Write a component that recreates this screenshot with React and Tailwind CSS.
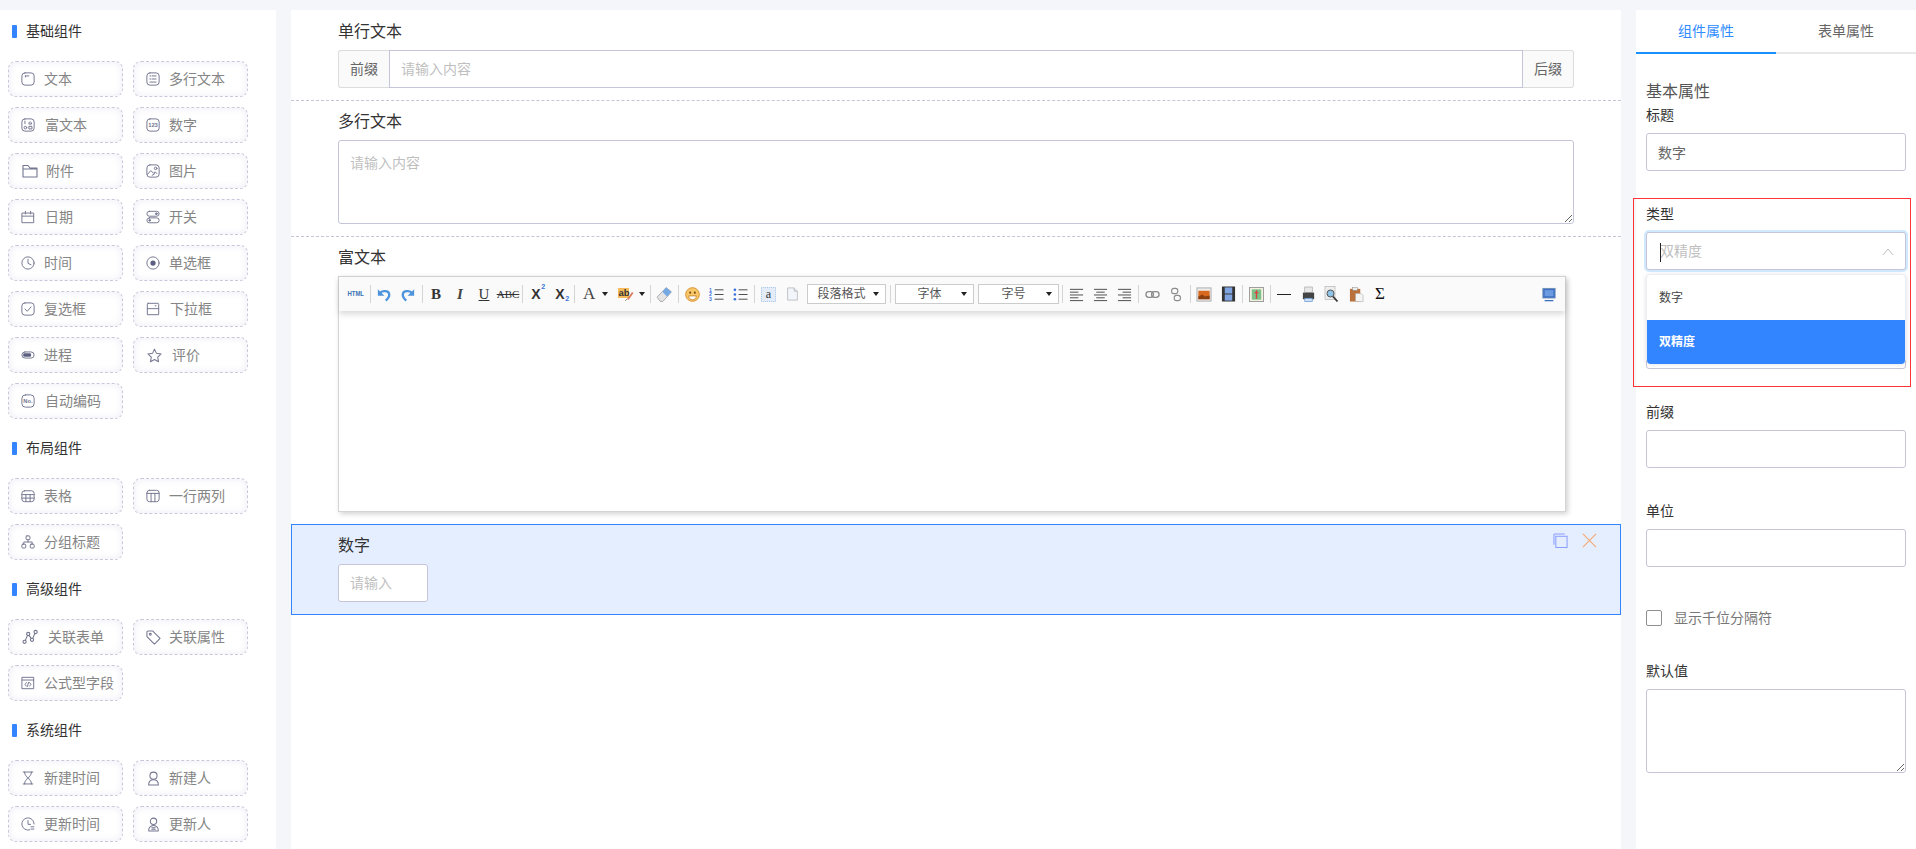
import React from 'react';

const Ico = ({ children, className = 'w-[14px] h-[14px]' }) => (
  <svg viewBox="0 0 16 16" fill="none" stroke="#73768f" strokeWidth="1.1" strokeLinecap="round" strokeLinejoin="round" className={`shrink-0 ${className}`}>
    {children}
  </svg>
);

const Box = () => <rect x="1" y="1" width="14" height="14" rx="3.5" />;

const icons = {
  text: <Ico><Box /><path d="M5 4.5h4M5 4.5v1.2" /></Ico>,
  multi: <Ico><Box /><path d="M4.5 4.5h1M7 4.5h4.5M4.5 8h1M7 8h4.5M4.5 11.5h7" /></Ico>,
  rich: <Ico><Box /><path d="M4.5 3.5v3M9 6.5c0-3 3-3 3 0zM9.5 9.5h3v3h-3z" /><circle cx="5" cy="11" r="1.5" /></Ico>,
  num: <Ico><Box /><text x="8" y="10.6" fontSize="6.6" fontWeight="700" textAnchor="middle" fill="#73768f" stroke="none" fontFamily="Liberation Sans">123</text></Ico>,
  folder: <Ico className="w-[16px] h-[16px] ml-[1px]"><path d="M1 14V2.5h5l2 2.5h7v9zM1 6h14" /></Ico>,
  image: <Ico><Box /><circle cx="11" cy="5" r="1.5" /><path d="M1.5 12l4-4.5 3 3 2-1.5 2 2M7 13l3-2" /></Ico>,
  date: <Ico><path d="M1.5 3.5h13v11h-13zM1.5 7h13M5 1.5v3M11 1.5v3" /></Ico>,
  toggle: <Ico><rect x="1" y="1.5" width="14" height="5.6" rx="2.8" /><rect x="1" y="9" width="14" height="5.6" rx="2.8" /><circle cx="11.8" cy="4.3" r="1" fill="#73768f" /><circle cx="4.2" cy="11.8" r="1" fill="#73768f" /></Ico>,
  clock: <Ico><circle cx="8" cy="8" r="7" /><path d="M8 3.8V8.4l3.4 1.6" /></Ico>,
  radio: <Ico><circle cx="8" cy="8" r="7" /><circle cx="8" cy="8" r="3" fill="#5b5f80" stroke="none" /></Ico>,
  check: <Ico><Box /><path d="M4.5 8l2.6 2.6 4.4-5" /></Ico>,
  select: <Ico><path d="M2.5 1.5h11a1 1 0 0 1 1 1v12h-13v-12a1 1 0 0 1 1-1zM1.5 7.6h13" /><path d="M10.5 4.3h1" /></Ico>,
  progress: <Ico><rect x="1" y="4.5" width="14" height="7" rx="3.5" /><rect x="2.5" y="6" width="9" height="4" rx="1.5" fill="#5b5f80" stroke="none" /></Ico>,
  star: <Ico className="w-[15px] h-[15px] ml-[1px]"><path d="M8 1.2l2.1 4.5 4.9.6-3.6 3.4.9 4.9L8 12.2l-4.3 2.4.9-4.9L1 6.3l4.9-.6z" /></Ico>,
  no: <Ico><rect x="1" y="1" width="14" height="14" rx="4" /><text x="8" y="10.6" fontSize="6.6" fontWeight="700" textAnchor="middle" fill="#73768f" stroke="none" fontFamily="Liberation Sans">No.</text></Ico>,
  table: <Ico><rect x="1" y="2" width="14" height="12.5" rx="3" /><path d="M1 6.4h14M1 10.4h14M5.6 6.4v8M10.4 6.4v8" /></Ico>,
  cols: <Ico><rect x="1" y="1.5" width="14" height="13" rx="3" /><path d="M1 5h14M5.8 5v9.5M10.2 5v9.5" /></Ico>,
  tree: <Ico><rect x="5.8" y="1" width="4.4" height="4.4" rx="1" /><rect x="1" y="10.5" width="4.4" height="4.4" rx="1" /><rect x="10.6" y="10.5" width="4.4" height="4.4" rx="1" /><path d="M8 5.4V8M3.2 10.5V8h9.6v2.5" /></Ico>,
  graph: <Ico className="w-[16px] h-[16px] ml-[1px]"><circle cx="2.6" cy="12.8" r="1.6" /><circle cx="6.2" cy="5" r="1.6" /><circle cx="10" cy="10.8" r="1.6" /><circle cx="13.6" cy="3" r="1.6" /><path d="M3.3 11.4l2.2-5M7 6.4l2.2 3M10.7 9.4l2.2-5" /></Ico>,
  tag: <Ico className="w-[15px] h-[15px]"><path d="M1 2.2a1.2 1.2 0 0 1 1.2-1.2H7l8 8-6 6-8-8z" /><circle cx="4.6" cy="4.6" r="1" /></Ico>,
  code: <Ico><path d="M1.5 1.5h13v13h-13zM1.5 4.6h13" /><path d="M6.2 7.5L4.6 9.6l1.6 2M9.8 7.5l1.6 2.1-1.6 2M8.6 7.4l-1.2 4.4" /></Ico>,
  hour: <Ico><path d="M2.5 1.2h11M2.5 14.8h11M4 1.2c0 4 3 5 3.6 6.8C7 9.8 4 10.8 4 14.8M12 1.2c0 4-3 5-3.6 6.8.6 1.8 3.6 2.8 3.6 6.8" /></Ico>,
  user: <Ico className="w-[15px] h-[15px]"><circle cx="8" cy="5" r="3.8" /><path d="M2.8 15c0-3.6 2-5.6 5.2-5.6s5.2 2 5.2 5.6z" /></Ico>,
  clock2: <Ico><path d="M15 8a7 7 0 1 0-5 6.7" /><path d="M8 4v4.4h3M11.4 11.2h3.4M11.4 13.8h3.4" /></Ico>,
  user2: <Ico className="w-[15px] h-[15px]"><circle cx="8" cy="4.6" r="3.4" /><path d="M3 15c-.6-3 1.4-6 5-6s5.600 3 5 6z" /><path d="M6.200 11.400h3.600M6.200 13h3.600" /></Ico>,
};

const groups = [
  {
    title: '基础组件',
    items: [
      ['文本', 'text', 'ml-[9px]'], ['多行文本', 'multi', 'ml-[9px]'],
      ['富文本', 'rich', 'ml-[10px]'], ['数字', 'num', 'ml-[9px]'],
      ['附件', 'folder', 'ml-[8px]'], ['图片', 'image', 'ml-[9px]'],
      ['日期', 'date', 'ml-[10px]'], ['开关', 'toggle', 'ml-[9px]'],
      ['时间', 'clock', 'ml-[9px]'], ['单选框', 'radio', 'ml-[9px]'],
      ['复选框', 'check', 'ml-[9px]'], ['下拉框', 'select', 'ml-[10px]'],
      ['进程', 'progress', 'ml-[9px]'], ['评价', 'star', 'ml-[10px]'],
      ['自动编码', 'no', 'ml-[10px]'],
    ],
  },
  {
    title: '布局组件',
    items: [['表格', 'table', 'ml-[9px]'], ['一行两列', 'cols', 'ml-[9px]'], ['分组标题', 'tree', 'ml-[9px]']],
  },
  {
    title: '高级组件',
    items: [['关联表单', 'graph', 'ml-[10px]'], ['关联属性', 'tag', 'ml-[8px]'], ['公式型字段', 'code', 'ml-[9px]']],
  },
  {
    title: '系统组件',
    items: [['新建时间', 'hour', 'ml-[9px]'], ['新建人', 'user', 'ml-[8px]'], ['更新时间', 'clock2', 'ml-[9px]'], ['更新人', 'user2', 'ml-[8px]']],
  },
];

function Palette() {
  return (
    <aside className="w-[276px] h-full shrink-0 bg-white">
      {groups.map((g) => (
        <section key={g.title} className="pb-[8px]">
          <div className="h-[42px] mb-[9px] flex items-center pl-[12px] text-[14px] text-[#333]">
            <span className="w-[5px] h-[13px] mr-[9px] rounded-[1px] bg-[#3385ff]" />
            {g.title}
          </div>
          <div className="grid grid-cols-[115px_115px] gap-x-[10px] gap-y-[10px] pl-[8px]">
            {g.items.map(([label, icon, gap]) => (
              <div key={label} className="h-[36px] flex items-center pl-[12px] rounded-[8px] border border-dashed border-[#c8c8da] shadow-[inset_0_0_7px_rgba(120,120,190,0.14)] text-[14px] text-[#858585]">
                {icons[icon]}
                <span className={gap}>{label}</span>
              </div>
            ))}
          </div>
        </section>
      ))}
    </aside>
  );
}

const Sep = ({ className = 'w-[4px]' }) => (
  <span className={`h-[18px] flex justify-center shrink-0 ${className}`}>
    <span className="w-[1px] h-full bg-[#d5d5d5]" />
  </span>
);

const Btn = ({ children, className = 'w-[24px]' }) => (
  <span className={`h-[24px] shrink-0 flex items-center justify-center ${className}`}>{children}</span>
);

const Caret = ({ className = '' }) => (
  <span className={`w-0 h-0 border-x-[3px] border-x-transparent border-t-[4px] border-t-[#222] ${className}`} />
);

const Tsvg = ({ children, w = 16, h = 16 }) => (
  <svg viewBox="0 0 16 16" fill="none" style={{ width: w, height: h }}>{children}</svg>
);

const Lines = ({ a }) => (
  <Tsvg w={15} h={15}>
    <path d={a} stroke="#444" strokeWidth="1" />
  </Tsvg>
);

const ToolSelect = ({ label, className }) => (
  <span className={`h-[20px] shrink-0 relative flex items-center justify-center border border-[#cccccc] bg-white text-[12px] text-[#555] ${className}`}>
    <span className="pr-[10px]">{label}</span>
    <Caret className="absolute right-[6px] top-[7px] border-x-[2.5px] border-t-[3px]" />
  </span>
);

function Toolbar() {
  const serif = "font-['Liberation_Serif',serif]";
  return (
    <div className="h-[34px] flex items-center pl-[5px] pr-[4px] bg-[#fafafa] shadow-[0_3px_6px_rgba(120,120,120,0.28)] relative">
      <Btn><span className="text-[7px] font-bold scale-x-[0.85] text-[#3a72b5] font-['Liberation_Sans',sans-serif]">HTML</span></Btn>
      <Sep />
      <Btn>
        <Tsvg w={14} h={15}>
          <path d="M3.500 6C7 3 14 3.500 14 8.500 14 11 12 13 10 15" stroke="#4e94dc" strokeWidth="2.600" />
          <path d="M1 2v7.500h7.500z" fill="#4e94dc" />
        </Tsvg>
      </Btn>
      <Btn>
        <Tsvg w={14} h={15}>
          <path d="M12.500 6C9 3 2 3.500 2 8.500 2 11 4 13 6 15" stroke="#4e94dc" strokeWidth="2.600" />
          <path d="M15 2v7.500H7.500z" fill="#4e94dc" />
        </Tsvg>
      </Btn>
      <Sep />
      <Btn><span className={`${serif} text-[15px] font-bold text-[#333]`}>B</span></Btn>
      <Btn><span className={`${serif} text-[15px] italic font-bold text-[#444]`}>I</span></Btn>
      <Btn><span className={`${serif} text-[15px] text-[#333] underline`}>U</span></Btn>
      <Btn><span className={`${serif} text-[11px] text-[#333] line-through`}>ABC</span></Btn>
      <Sep />
      <Btn>
        <span className="relative text-[14px] font-bold text-[#333] font-['Liberation_Sans',sans-serif]">X<span className="absolute left-[10px] -top-[1px] text-[7px] leading-[8px] text-[#3a72dc]">2</span></span>
      </Btn>
      <Btn>
        <span className="relative text-[14px] font-bold text-[#333] font-['Liberation_Sans',sans-serif]">X<span className="absolute left-[10px] bottom-[2px] text-[7px] leading-[8px] text-[#3a72dc]">2</span></span>
      </Btn>
      <Sep />
      <span className="w-[36px] h-[24px] shrink-0 flex items-center pl-[7px]">
        <span className={`${serif} w-[13px] text-[17px] text-[#444]`}>A</span>
        <Caret className="ml-[6px]" />
      </span>
      <span className="w-[36px] h-[24px] shrink-0 flex items-center pl-[6px]">
        <Tsvg w={16} h={16}>
          <rect x="0" y="2" width="11" height="10" fill="#f5bb5a" />
          <path d="M9 13l5-7 1.500 1-5 7z" fill="#d9795e" />
          <path d="M7 15l2-2" stroke="#999" />
          <text x="0.500" y="9.500" fontSize="9.500" fontWeight="700" fill="#333" stroke="none" fontFamily="Liberation Sans">ab</text>
        </Tsvg>
        <Caret className="ml-[5px]" />
      </span>
      <Sep />
      <Btn>
        <Tsvg w={17} h={17}><path d="M1 10.500L9.500 1.500l5 4L6.500 14.500H4z" fill="#e4e4e4" stroke="#999" strokeWidth=".7" /><path d="M6 5.500L9.500 1.500l5 4L10.500 10z" fill="#75a9e3" /></Tsvg>
      </Btn>
      <Sep />
      <Btn>
        <Tsvg w={15} h={15}>
          <circle cx="8" cy="8" r="7.300" fill="#f8c868" stroke="#d98e2b" />
          <circle cx="5.500" cy="6" r="1.100" fill="#7a4a10" />
          <circle cx="10.500" cy="6" r="1.100" fill="#7a4a10" />
          <path d="M4 9.500h8c0 3-2 4-4 4s-4-1-4-4z" fill="#fff" stroke="#b96d1a" strokeWidth=".7" />
        </Tsvg>
      </Btn>
      <Btn>
        <Tsvg w={15} h={15}>
          <path d="M6 3h9.500M6 8h9.500M6 13h9.500" stroke="#444" />
          <text x="0" y="5" fontSize="5.500" fontWeight="700" fill="#3a72dc" fontFamily="Liberation Sans">1</text>
          <text x="0" y="10" fontSize="5.500" fontWeight="700" fill="#3a72dc" fontFamily="Liberation Sans">2</text>
          <text x="0" y="15" fontSize="5.500" fontWeight="700" fill="#3a72dc" fontFamily="Liberation Sans">3</text>
        </Tsvg>
      </Btn>
      <Btn>
        <Tsvg w={15} h={15}>
          <path d="M6 3h9.500M6 8h9.500M6 13h9.500" stroke="#444" />
          <circle cx="2" cy="3" r="1.400" fill="#3a72dc" />
          <circle cx="2" cy="8" r="1.400" fill="#3a72dc" />
          <circle cx="2" cy="13" r="1.400" fill="#3a72dc" />
        </Tsvg>
      </Btn>
      <Sep />
      <Btn>
        <Tsvg w={15} h={15}>
          <rect x=".500" y=".500" width="15" height="15" fill="#e3ecf8" stroke="#9dbce3" strokeDasharray="1 1" />
          <text x="8" y="12" fontSize="13" textAnchor="middle" fill="#333" fontFamily="Liberation Serif">a</text>
        </Tsvg>
      </Btn>
      <Btn>
        <Tsvg w={13} h={16}><path d="M2 .500h8l4 4v11H2z" fill="#f2f5f9" stroke="#b4b8be" /><path d="M10 .500v4h4" fill="#dfe4ea" stroke="#b4b8be" /></Tsvg>
      </Btn>
      <ToolSelect label="段落格式" className="w-[79px] ml-[3px]" />
      <Sep className="w-[4px] ml-[2px]" />
      <ToolSelect label="字体" className="w-[79px] ml-[3px]" />
      <ToolSelect label="字号" className="w-[81px] ml-[4px]" />
      <Sep className="w-[4px] ml-[1px]" />
      <Btn><Lines a="M1 2.500h14M1 5.500h9M1 8.500h14M1 11.500h9M1 14.500h14" /></Btn>
      <Btn><Lines a="M1 2.500h14M3.500 5.500h9M1 8.500h14M3.500 11.500h9M1 14.500h14" /></Btn>
      <Btn><Lines a="M1 2.500h14M6 5.500h9M1 8.500h14M6 11.500h9M1 14.500h14" /></Btn>
      <Sep />
      <Btn>
        <Tsvg w={15} h={15}><rect x="1" y="5" width="8" height="6" rx="3" stroke="#8b8b8b" strokeWidth="1.400" /><rect x="7" y="5" width="8" height="6" rx="3" stroke="#8b8b8b" strokeWidth="1.400" /></Tsvg>
      </Btn>
      <Btn>
        <Tsvg w={14} h={17}><rect x="3" y="1" width="7" height="6" rx="2.500" stroke="#8b8b8b" strokeWidth="1.300" /><rect x="6" y="9" width="7" height="6" rx="2.500" stroke="#8b8b8b" strokeWidth="1.300" /></Tsvg>
      </Btn>
      <Sep />
      <Btn>
        <Tsvg w={16} h={15}><rect x=".500" y="1" width="15" height="14" fill="#eee" stroke="#aaa" /><rect x="2" y="4" width="12" height="9" fill="#d9691e" /><path d="M2 10l4-2 3 2 5-1v4H2z" fill="#8a3f10" /></Tsvg>
      </Btn>
      <Btn>
        <Tsvg w={15} h={18}><rect x="1" y="0" width="14" height="16" fill="#333" /><rect x="4" y="1" width="8" height="6.500" fill="#7fa4e0" /><rect x="4" y="8.500" width="8" height="6.500" fill="#7fa4e0" /></Tsvg>
      </Btn>
      <Sep />
      <Btn>
        <Tsvg w={15} h={17}><rect x=".500" y=".500" width="15" height="15" fill="#f3f0e0" stroke="#999" /><rect x="3" y="2.500" width="10" height="11" fill="#7cc08a" /><path d="M8 3.500v9M6 6h4" stroke="#d8423a" strokeWidth="1.400" /></Tsvg>
      </Btn>
      <Sep />
      <Btn><span className="w-[14px] h-[1px] bg-[#222]" /></Btn>
      <Btn>
        <Tsvg w={15} h={17}><rect x="4" y="0" width="8" height="6" fill="#e8e8e8" stroke="#999" strokeWidth=".6" /><rect x="2" y="6" width="12" height="7" fill="#444" /><rect x="4" y="12" width="8" height="3.500" fill="#cfe0f5" stroke="#5b8fd0" strokeWidth=".7" /></Tsvg>
      </Btn>
      <Btn>
        <Tsvg w={16} h={17}><rect x="1" y="0" width="10" height="13" fill="#eee" stroke="#aaa" strokeWidth=".6" /><circle cx="6.500" cy="7" r="3.500" fill="#8fc4e8" stroke="#555" /><path d="M9 10l4.500 5" stroke="#333" strokeWidth="1.800" /></Tsvg>
      </Btn>
      <Btn>
        <Tsvg w={15} h={17}><rect x="1" y="2" width="11" height="13.500" fill="#b9703a" /><rect x="4" y=".500" width="5" height="3" fill="#eee" stroke="#888" strokeWidth=".5" /><path d="M7 7h6l2 2v6.500H7z" fill="#f4f4f4" stroke="#aaa" strokeWidth=".6" /></Tsvg>
      </Btn>
      <Btn><span className={`${serif} text-[17px] text-[#111]`}>Σ</span></Btn>
      <span className="ml-auto w-[24px] flex justify-center">
        <Tsvg w={14} h={15}><rect x="1" y="1" width="14" height="11" fill="#3c6fc4" stroke="#6f8fb5" /><rect x="3" y="3" width="10" height="7" fill="#6d9be0" /><path d="M3 15h10" stroke="#3c6fc4" strokeWidth="1.500" /></Tsvg>
      </span>
    </div>
  );
}

const fieldBorder = 'border border-[#c5c5d9] rounded-[3px] bg-white';

function Canvas() {
  const label = 'h-[22px] mb-[8px] leading-[24px] text-[16px] text-[#333]';
  return (
    <main className="w-[1330px] h-full ml-[15px] shrink-0 bg-white text-[14px] text-[#333]">
      <div className="pt-[10px] pb-[12px] px-[47px] border-b border-dashed border-[#c5c5d9]">
        <div className={label}>单行文本</div>
        <div className="h-[38px] flex text-[#666]">
          <span className="w-[51px] flex items-center justify-center bg-[#fafafa] border border-r-0 border-[#dcdcdc] rounded-l-[3px]">前缀</span>
          <input className="flex-1 min-w-0 px-[11px] border border-[#c5c5d9] outline-none text-[14px] placeholder:text-[#bfbfbf]" placeholder="请输入内容" readOnly />
          <span className="w-[51px] flex items-center justify-center bg-[#fafafa] border border-l-0 border-[#dcdcdc] rounded-r-[3px]">后缀</span>
        </div>
      </div>
      <div className="pt-[9px] pb-[12px] px-[47px] border-b border-dashed border-[#c5c5d9]">
        <div className={label}>多行文本</div>
        <textarea className={`block w-full h-[84px] px-[11px] pt-[11px] outline-none text-[14px] leading-[22px] placeholder:text-[#bfbfbf] ${fieldBorder}`} placeholder="请输入内容" readOnly />
      </div>
      <div className="pt-[9px] pb-[12px] px-[47px]">
        <div className={label}>富文本</div>
        <div className="w-[1228px] h-[236px] border border-[#d4d4d4] bg-white shadow-[2px_2px_5px_#d3d3d3]">
          <Toolbar />
        </div>
      </div>
      <div className="relative h-[91px] pt-[9px] px-[46px] border border-[#3385ff] bg-[#e5eeff]">
        <div className={label}>数字</div>
        <input className={`block w-[90px] h-[38px] px-[11px] outline-none text-[14px] placeholder:text-[#bfbfbf] ${fieldBorder}`} placeholder="请输入" readOnly />
        <svg viewBox="0 0 16 16" fill="none" stroke="#8b9dff" strokeWidth="1.100" className="absolute right-[52px] top-[8px] w-[15px] h-[15px]">
          <rect x="3" y="3.500" width="12" height="12" />
          <path d="M1 12.500V2a1 1 0 0 1 1-1h10.500" />
        </svg>
        <svg viewBox="0 0 16 16" fill="none" stroke="#f6a56b" strokeWidth="1.100" className="absolute right-[23px] top-[8px] w-[15px] h-[15px]">
          <path d="M1 1l14 14M15 1L1 15" />
        </svg>
      </div>
    </main>
  );
}

const Field = ({ label, children, className = 'mb-[32px]' }) => (
  <div className={`relative ${className}`}>
    <div className="h-[22px] mb-[7px] leading-[22px] text-[14px] text-[#333]">{label}</div>
    {children}
  </div>
);

function Properties() {
  const input = `block w-[260px] h-[38px] px-[11px] outline-none text-[14px] text-[#666] ${fieldBorder}`;
  return (
    <aside className="relative w-[280px] h-full ml-[15px] shrink-0 bg-white">
      <div className="flex h-[44px] text-[14px]">
        <div className="w-[140px] flex items-center justify-center border-b-2 border-[#1890ff] text-[#2f8cff]">组件属性</div>
        <div className="w-[140px] flex items-center justify-center border-b-2 border-[#e8e8e8] text-[#666]">表单属性</div>
      </div>
      <div className="pt-[26px] px-[10px]">
        <div className="h-[24px] leading-[24px] text-[16px] text-[#555]">基本属性</div>
        <Field label="标题">
          <input className={input} defaultValue="数字" readOnly />
        </Field>
        <Field label="类型">
          <div className={`relative h-[38px] flex items-center pl-[13px] text-[14px] text-[#bfbfbf] shadow-[0_0_0_2px_rgba(24,144,255,0.2)] ${fieldBorder}`}>
            <span className="absolute left-[13px] top-[10px] w-[1px] h-[19px] bg-[#222]" />
            双精度
            <svg viewBox="0 0 12 8" fill="none" stroke="#bfbfbf" strokeWidth="1" className="absolute right-[11px] top-[15px] w-[12px] h-[8px]">
              <path d="M1 7l5-6 5 6" />
            </svg>
          </div>
          <div className="absolute z-10 left-0 top-[71px] w-[260px] h-[89px] py-[1px] rounded-[4px] bg-white border border-[#eceef5] shadow-[0_1px_4px_rgba(90,90,140,0.22)] text-[12px]">
            <div className="h-[44px] flex items-center pl-[12px] text-[#444]">数字</div>
            <div className="h-[44px] flex items-center pl-[12px] rounded-b-[4px] bg-[#3385ff] font-bold text-white">双精度</div>
          </div>
        </Field>
        <Field label="">
          <div className={input} />
        </Field>
        <Field label="前缀">
          <input className={input} readOnly />
        </Field>
        <Field label="单位">
          <input className={input} readOnly />
        </Field>
        <div className="h-[38px] mb-[23px] flex items-center text-[14px] text-[#777]">
          <span className="w-[16px] h-[16px] mr-[12px] rounded-[2px] border border-[#8f8f8f] bg-white" />
          显示千位分隔符
        </div>
        <Field label="默认值" className="">
          <textarea className={`block w-[260px] h-[84px] outline-none ${fieldBorder}`} readOnly />
        </Field>
      </div>
      <div className="absolute left-[-3px] top-[188px] w-[278px] h-[189px] border border-[#ff3333] pointer-events-none z-20" />
    </aside>
  );
}

export default function App() {
  return (
    <div className="w-[1916px] h-[849px] pt-[10px] flex overflow-hidden bg-[#f5f6fa] font-['Liberation_Sans','Noto_Sans_CJK_SC',sans-serif]">
      <Palette />
      <Canvas />
      <Properties />
    </div>
  );
}
